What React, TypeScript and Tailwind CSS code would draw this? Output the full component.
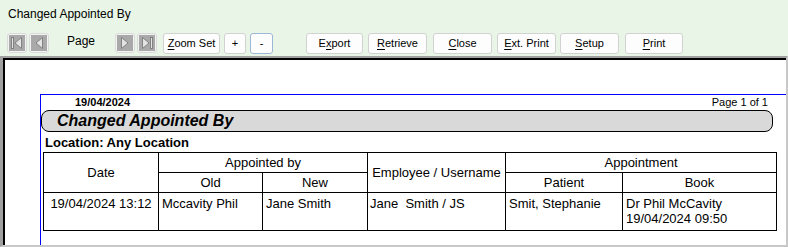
import React from "react";

type Btn = { label: string; mnemonic: number; width: string; ml: string; focus?: boolean };

const BUTTONS: Btn[] = [
  { label: "Zoom Set", mnemonic: 0, width: "w-[57px]", ml: "ml-[6px]" },
  { label: "+", mnemonic: -1, width: "w-[22px]", ml: "ml-[4px]" },
  { label: "-", mnemonic: -1, width: "w-[23px]", ml: "ml-[4px]", focus: true },
  { label: "Export", mnemonic: 1, width: "w-[57px]", ml: "ml-[33px]" },
  { label: "Retrieve", mnemonic: 0, width: "w-[59px]", ml: "ml-[5px]" },
  { label: "Close", mnemonic: 0, width: "w-[59px]", ml: "ml-[6px]" },
  { label: "Ext. Print", mnemonic: 0, width: "w-[59px]", ml: "ml-[5px]" },
  { label: "Setup", mnemonic: 0, width: "w-[59px]", ml: "ml-[4px]" },
  { label: "Print", mnemonic: 0, width: "w-[58px]", ml: "ml-[6px]" },
];

function Label({ text, at }: { text: string; at: number }) {
  if (at < 0) return <>{text}</>;
  return (
    <>
      {text.slice(0, at)}
      <span className="underline underline-offset-2">{text[at]}</span>
      {text.slice(at + 1)}
    </>
  );
}

// grey VCR style arrows, drawn in a 16x16 box
function NavIcon({ kind }: { kind: "first" | "prev" | "next" | "last" }) {
  const fill = "#e4e4e4";
  const edge = "#7a7a7a";
  const glyph = {
    first: (
      <>
        <rect x="2.5" y="2.5" width="2" height="11" fill={fill} stroke={edge} strokeWidth="0.9" />
        <path d="M12.5 2.5 L6 8 L12.5 13.5 Z" fill={fill} stroke={edge} strokeWidth="0.9" />
      </>
    ),
    prev: <path d="M11.5 2.5 L5 8 L11.5 13.5 Z" fill={fill} stroke={edge} strokeWidth="0.9" />,
    next: <path d="M4.5 2.5 L11 8 L4.5 13.5 Z" fill={fill} stroke={edge} strokeWidth="0.9" />,
    last: (
      <>
        <path d="M3.5 2.5 L10 8 L3.5 13.5 Z" fill={fill} stroke={edge} strokeWidth="0.9" />
        <rect x="11.5" y="2.5" width="2" height="11" fill={fill} stroke={edge} strokeWidth="0.9" />
      </>
    ),
  }[kind];
  return (
    <div className="w-[20px] h-[20px] rounded-[3px] border border-[#dadada] bg-[#f3f3f3] flex items-center justify-center">
      <svg width="16" height="16" viewBox="0 0 16 16">
        <rect x="0" y="0" width="16" height="16" fill="#a9a9a9" />
        {glyph}
      </svg>
    </div>
  );
}

export default function App() {
  return (
    <div className="w-[788px] h-[247px] flex flex-col overflow-hidden bg-[#e9f5e6] font-['Liberation_Sans',Arial,sans-serif] text-black">
      <div className="h-[28px] flex items-center pl-[8px] text-[12px]">Changed Appointed By</div>

      <div className="h-[28px] flex items-start pt-[5px] pl-[7px] text-[11px]">
        <NavIcon kind="first" />
        <div className="ml-[2px]">
          <NavIcon kind="prev" />
        </div>
        <div className="w-[66px] pl-[18px] text-[12px] leading-[16px]">Page</div>
        <NavIcon kind="next" />
        <div className="ml-[2px]">
          <NavIcon kind="last" />
        </div>
        {BUTTONS.map((b) => (
          <div
            key={b.label}
            className={[
              b.width,
              b.ml,
              "h-[21px] rounded-[3px] border bg-[#fdfdfd] flex items-center justify-center",
              b.focus ? "border-[#9db7d8]" : "border-[#d2d2d2]",
            ].join(" ")}
          >
            <Label text={b.label} at={b.mnemonic} />
          </div>
        ))}
      </div>

      <div className="flex-1 flex flex-col border-l-[3px] border-t-2 border-r-2 border-b-2 border-l-[#a0a0a0] border-t-[#a0a0a0] border-r-[#c8c8c8] border-b-[#c8c8c8]">
        <div className="flex-1 flex flex-col border-l-2 border-t-2 border-black bg-white pl-[35px] pt-[34px]">
          <div className="flex-1 flex flex-col border-l border-t border-[#0000ff]">
            <div className="h-[15px] flex items-center justify-between pl-[34px] pr-[18px] text-[11px] leading-[15px]">
              <span className="font-bold">19/04/2024</span>
              <span>Page 1 of 1</span>
            </div>

            <div className="w-[732px] h-[22px] rounded-[8px] border border-black bg-[#d9d9d9] flex items-center pl-[15px]">
              <span className="text-[16px] font-bold italic leading-[18px]">Changed Appointed By</span>
            </div>

            <div className="h-[20px] pl-[4px] text-[13px] font-bold leading-[21px]">Location: Any Location</div>

            <table className="ml-[2px] w-[733px] table-fixed border-collapse text-[13px] leading-[15px]">
              <colgroup>
                <col className="w-[115px]" />
                <col className="w-[104px]" />
                <col className="w-[105px]" />
                <col className="w-[138px]" />
                <col className="w-[117px]" />
                <col className="w-[154px]" />
              </colgroup>
              <thead>
                <tr className="h-[20px]">
                  <th rowSpan={2} className="border border-black font-normal text-center align-middle">Date</th>
                  <th colSpan={2} className="border border-black font-normal text-center align-middle">Appointed by</th>
                  <th rowSpan={2} className="border border-black font-normal text-center align-middle">Employee / Username</th>
                  <th colSpan={2} className="border border-black font-normal text-center align-middle">Appointment</th>
                </tr>
                <tr className="h-[20px]">
                  <th className="border border-black font-normal text-center align-middle">Old</th>
                  <th className="border border-black font-normal text-center align-middle">New</th>
                  <th className="border border-black font-normal text-center align-middle">Patient</th>
                  <th className="border border-black font-normal text-center align-middle">Book</th>
                </tr>
              </thead>
              <tbody>
                <tr className="h-[38px]">
                  <td className="border border-black align-top text-center pt-[3px]">19/04/2024 13:12</td>
                  <td className="border border-black align-top pl-[3px] pt-[3px]">Mccavity Phil</td>
                  <td className="border border-black align-top pl-[3px] pt-[3px]">Jane Smith</td>
                  <td className="border border-black align-top pl-[2px] pt-[3px] whitespace-pre">Jane  Smith / JS</td>
                  <td className="border border-black align-top pl-[3px] pt-[3px]">Smit, Stephanie</td>
                  <td className="border border-black align-top pl-[3px] pt-[3px]">
                    Dr Phil McCavity
                    <br />
                    19/04/2024 09:50
                  </td>
                </tr>
              </tbody>
            </table>
          </div>
        </div>
      </div>
    </div>
  );
}
